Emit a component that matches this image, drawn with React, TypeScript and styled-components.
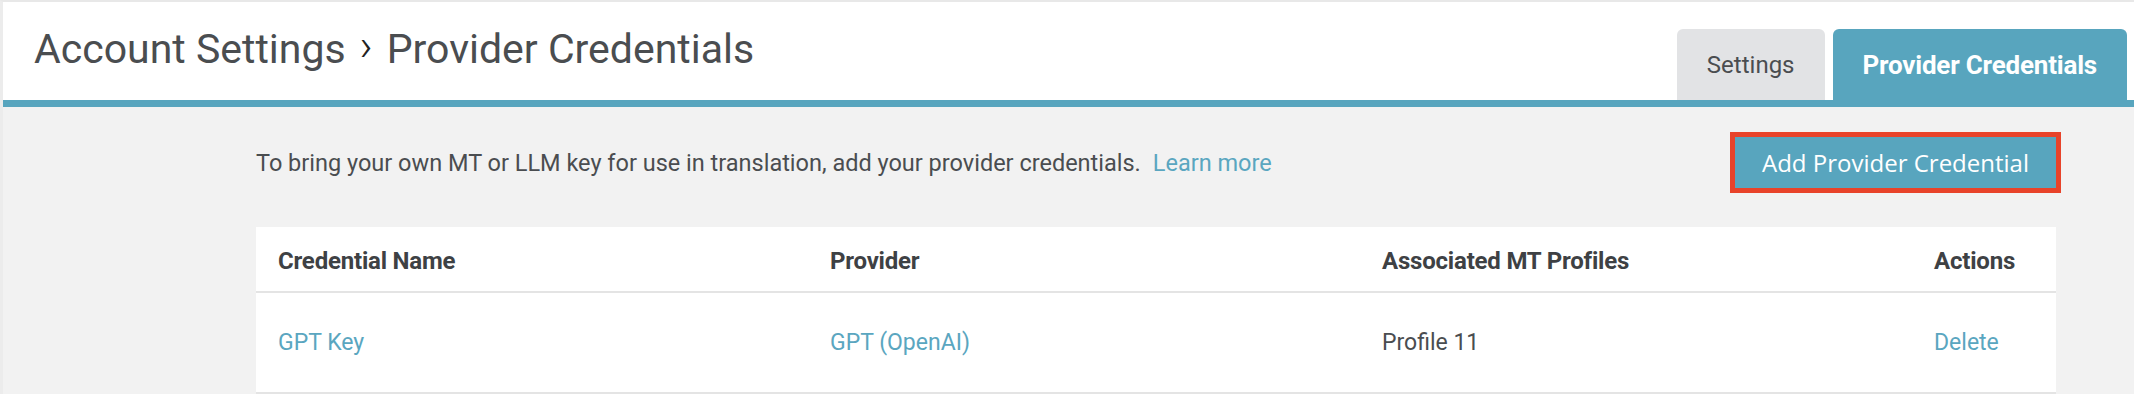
import React from "react";
import styled, { createGlobalStyle } from "styled-components";

const GlobalStyle = createGlobalStyle`
  html, body {
    margin: 0;
    padding: 0;
    background: #f2f2f2;
  }
  body {
    font-family: Roboto, "Liberation Sans", Arial, sans-serif;
    color: #4a4d50;
  }
  * { box-sizing: border-box; }
`;

const Frame = styled.div`
  border-top: 2px solid #e8e8e8;
  border-left: 3px solid #ececec;
  min-height: 392px;
  background: #f2f2f2;
`;

const Header = styled.header`
  display: flex;
  justify-content: space-between;
  align-items: flex-end;
  height: 98px;
  background: #ffffff;
  padding: 0 7px 0 31px;
`;

const Title = styled.h1`
  align-self: flex-start;
  margin: 22px 0 0;
  font-family: Roboto, "Liberation Sans", sans-serif;
  font-weight: 400;
  font-size: 41px;
  line-height: 48px;
  color: #4a4d50;
  letter-spacing: 0;
`;

const Crumb = styled.span`
  display: inline-block;
  margin: 0 14px 0 14px;
  font-size: 44px;
  color: #222222;
  font-weight: 300;
  transform: translateY(-2px);
`;

const Tabs = styled.nav`
  display: flex;
  gap: 8px;
`;

const Tab = styled.div<{ $active?: boolean }>`
  display: flex;
  align-items: center;
  height: 71px;
  padding: 0 30px;
  border-radius: 6px 6px 0 0;
  background: ${(p) => (p.$active ? "#58a5be" : "#e2e3e5")};
  color: ${(p) => (p.$active ? "#ffffff" : "#4a4d50")};
  font-family: Roboto, "Liberation Sans", sans-serif;
  font-size: ${(p) => (p.$active ? "26px" : "24px")};
  font-weight: ${(p) => (p.$active ? 700 : 400)};
  letter-spacing: ${(p) => (p.$active ? "-0.2px" : "0")};
`;

const Bar = styled.div`
  height: 7px;
  background: #58a5be;
`;

const Content = styled.main`
  width: 1800px;
  margin-left: 253px;
`;

const Toolbar = styled.div`
  display: flex;
  justify-content: space-between;
  align-items: center;
  padding: 30px 0 39px;
`;

const Intro = styled.p`
  margin: 0;
  font-size: 23.5px;
  line-height: 28px;
  color: #4a4d50;
`;

const Link = styled.a`
  color: #5aa6c0;
  text-decoration: none;
  cursor: pointer;
`;

const LearnMore = styled(Link)`
  margin-left: 12px;
`;

const AddButton = styled.button`
  width: 321px;
  height: 51px;
  border: none;
  background: #58a5be;
  color: #ffffff;
  font-family: "Open Sans", Roboto, sans-serif;
  font-size: 24px;
  font-weight: 400;
  box-shadow: 0 0 0 5px #e8432a;
  cursor: pointer;
  padding: 0;
`;

const Table = styled.div`
  background: #ffffff;
`;

const Row = styled.div<{ $head?: boolean }>`
  display: grid;
  grid-template-columns: 552px 552px 552px 1fr;
  align-items: center;
  height: ${(p) => (p.$head ? "66px" : "101px")};
  border-bottom: 2px solid #e4e4e4;
`;

const HeadCell = styled.div`
  padding: 0 22px;
  font-size: 24px;
  font-weight: 700;
  color: #3e4144;
  letter-spacing: -0.2px;
  transform: translateY(2px);
`;

const Cell = styled.div`
  padding: 0 22px;
  font-size: 23px;
  color: #4a4d50;
`;

const columns = ["Credential Name", "Provider", "Associated MT Profiles", "Actions"];

const rows = [
  { name: "GPT Key", provider: "GPT (OpenAI)", profiles: "Profile 11" },
];

export default function App() {
  return (
    <>
      <GlobalStyle />
      <Frame>
        <Header>
          <Title>
            Account Settings<Crumb>›</Crumb>Provider Credentials
          </Title>
          <Tabs>
            <Tab>Settings</Tab>
            <Tab $active>Provider Credentials</Tab>
          </Tabs>
        </Header>
        <Bar />
        <Content>
          <Toolbar>
            <Intro>
              To bring your own MT or LLM key for use in translation, add your provider credentials.
              <LearnMore>Learn more</LearnMore>
            </Intro>
            <AddButton>Add Provider Credential</AddButton>
          </Toolbar>
          <Table>
            <Row $head>
              {columns.map((c) => (
                <HeadCell key={c}>{c}</HeadCell>
              ))}
            </Row>
            {rows.map((r) => (
              <Row key={r.name}>
                <Cell>
                  <Link>{r.name}</Link>
                </Cell>
                <Cell>
                  <Link>{r.provider}</Link>
                </Cell>
                <Cell>{r.profiles}</Cell>
                <Cell>
                  <Link>Delete</Link>
                </Cell>
              </Row>
            ))}
          </Table>
        </Content>
      </Frame>
    </>
  );
}
